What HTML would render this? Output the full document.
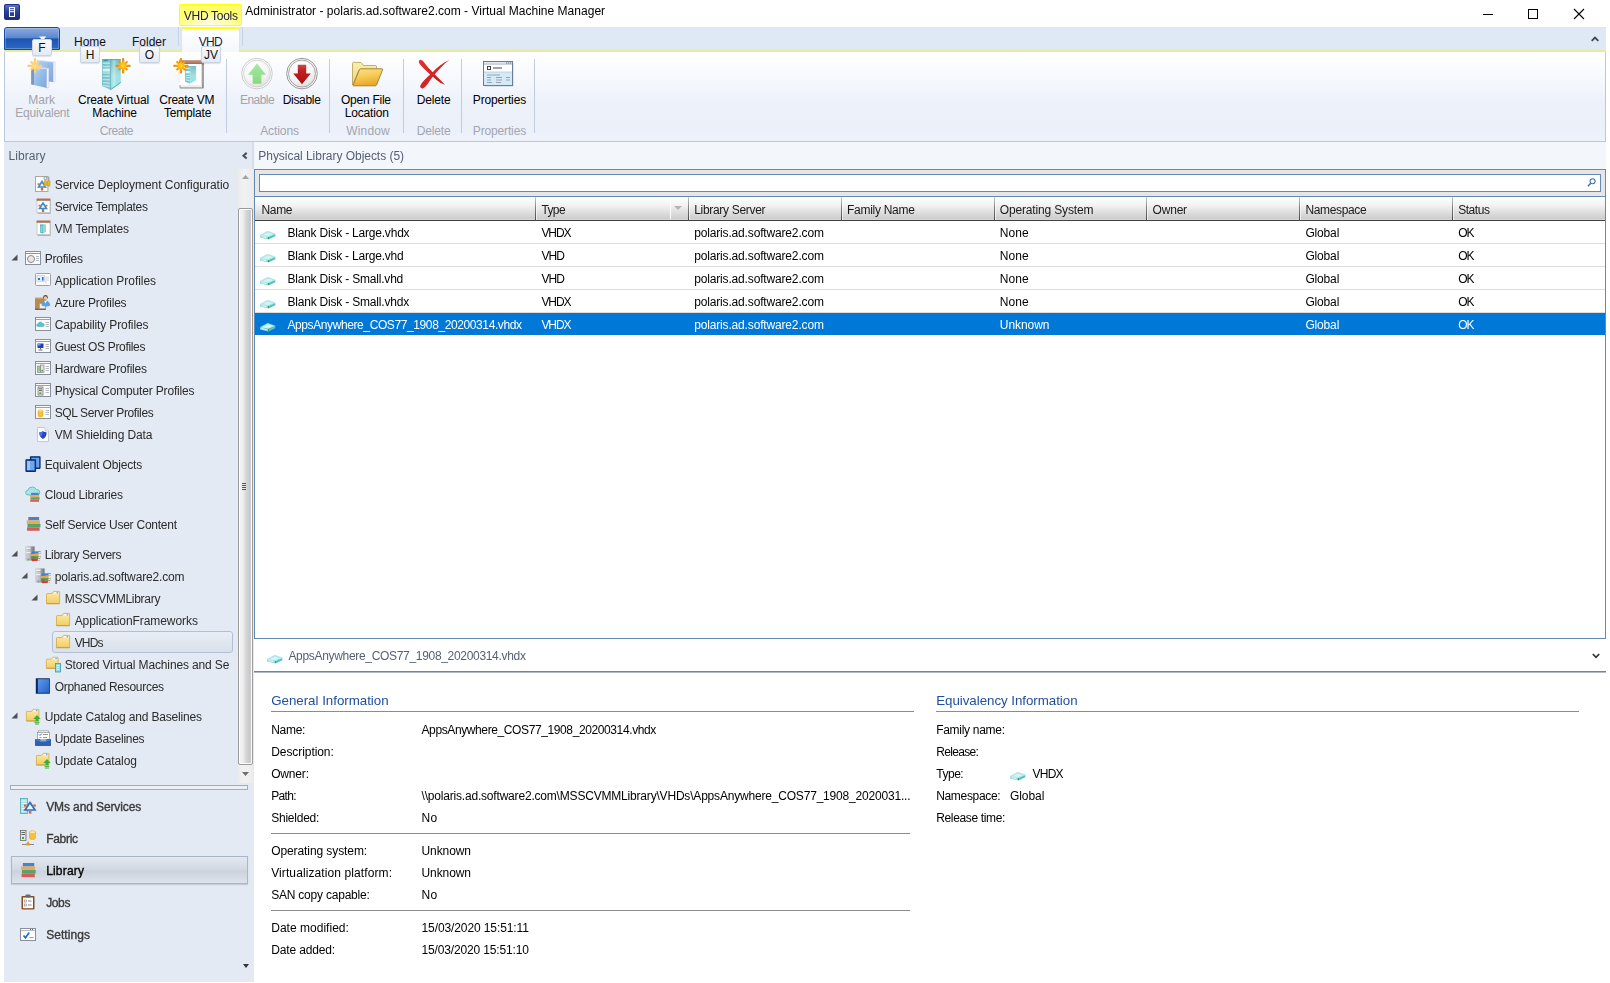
<!DOCTYPE html>
<html>
<head>
<meta charset="utf-8">
<title>Virtual Machine Manager</title>
<style>
*{box-sizing:border-box;margin:0;padding:0}
html,body{width:1610px;height:983px;overflow:hidden;background:#fff}
body{font-family:"Liberation Sans",sans-serif;font-size:12px;color:#1a1a1a;position:relative}
.abs{position:absolute}
.t{position:absolute;white-space:nowrap;line-height:14px;height:14px}
svg{position:absolute;overflow:visible}
/* title */
#titletxt{left:245px;top:4px;color:#000}
/* ribbon */
#tabstrip{left:4px;top:27px;width:1602px;height:24px;background:#dfe8f5}
#yline{left:4px;top:50px;width:1602px;height:2px;background:linear-gradient(#e6ec9e 0%,#e6ec9e 40%,#ffff00 40%,#ffff00 100%)}
#filebtn{left:4px;top:27px;width:56px;height:23px;border:1px solid #0e49ad;border-radius:3px 3px 0 0;background:linear-gradient(#8aaade 0%,#5d87cd 46%,#1c54b4 52%,#2f67c2 100%);box-shadow:inset 0 0 0 1px rgba(255,255,255,.25)}
#ctxtab{left:179px;top:4px;width:63px;height:22px;border:1px solid #ffff00;border-radius:2px;background:radial-gradient(ellipse 60% 70% at 50% 100%,#fffff0 0%,#ffff6e 100%)}
#vhdtab{left:181px;top:28px;width:59px;height:24px;border:1px solid #ffff00;border-bottom:none;border-radius:4px 4px 0 0;background:linear-gradient(#ffffff,#f4f7fc)}
.tabsep{width:1px;height:19px;top:27px;background:#c6d3e6}
.keytip{position:absolute;height:17px;border:1px solid #c9d3e3;border-radius:2px;background:linear-gradient(#f7f9fc,#e3eaf4);color:#111;text-align:center;line-height:17px;font-size:12px;box-shadow:0 1px 1px rgba(120,140,170,.25)}
#ribbon{left:4px;top:52px;width:1602px;height:90px;border:1px solid #b9c8de;border-top:none;background:linear-gradient(#ffffff 0%,#fbfcfe 14%,#f4f7fc 36%,#edf1f9 56%,#ecf0f9 85%,#eef2fa 100%)}
.rsep{position:absolute;width:1px;top:59px;height:74px;background:#c0cde0}
.rl{position:absolute;white-space:nowrap;text-align:center;line-height:13px;color:#000}
.rl.dis{color:#a6a6ad}
.gl{position:absolute;white-space:nowrap;text-align:center;line-height:14px;color:#a3a7b3}
/* left nav */
#left{left:4px;top:142px;width:250px;height:840px;background:#e4eaf3}
.nav{position:absolute;white-space:nowrap;line-height:14px;height:14px;color:#2b2b2b}
.ic{position:absolute;width:16px;height:16px}
.exp{position:absolute;width:0;height:0;border-left:6px solid transparent;border-bottom:6px solid #4a4a4a}
/* main */
#mainhdr{left:254px;top:142px;width:1352px;height:27px;background:#f3f6fb}
#listpanel{left:254px;top:169px;width:1352px;height:470px;border:1px solid #6389b6;background:#fff}
#searchbar{left:255px;top:170px;width:1350px;height:27px;background:#e6e6e6;border-bottom:1px solid #6389b6}
#searchbox{left:259px;top:174px;width:1342px;height:18px;border:1px solid #6389b6;background:#fff}
#colhdr{left:255px;top:197px;width:1350px;height:24px;background:linear-gradient(#ffffff 0%,#f3f3f3 35%,#e0e0e0 65%,#cdcdcd 94%,#dcdcdc 100%);border-bottom:1px solid #404040}
.csep{position:absolute;top:197px;width:1px;height:23px;background:linear-gradient(#c8c8c8,#7a7a7a 50%,#4c4c4c);box-shadow:1px 0 0 rgba(255,255,255,.6)}
.rowsep{position:absolute;left:255px;width:1350px;height:1px;background:#dcdcdc}
#selrow{left:255px;top:313px;width:1350px;height:22px;background:#0078d7}
.sel{color:#fff}
.slate{color:#566075}
.navb{-webkit-text-stroke:.35px currentColor}
.blue{color:#1e4e9d;font-size:13.4px}
.hr{position:absolute;height:1px;background:#8c8c8c}
#titlebar,#leftwrap,#mainwrap,#detailwrap{will-change:transform;position:absolute;left:0;top:0;width:0;height:0}

</style>
</head>
<body>
<div id="titlebar">
<svg style="left:4px;top:4px" width="16" height="16" viewBox="0 0 16 16">
<defs><linearGradient id="ag" x1="0" y1="0" x2="0" y2="1"><stop offset="0" stop-color="#5f74b8"/><stop offset=".5" stop-color="#2a3f96"/><stop offset="1" stop-color="#1a2c80"/></linearGradient></defs>
<rect x="0" y="0" width="16" height="16" rx="2" fill="#1d2f86"/><rect x="1" y="1" width="14" height="14" rx="1.5" fill="url(#ag)"/>
<rect x="5" y="3" width="6" height="10" fill="#fff"/><rect x="6" y="4.2" width="4" height="1" fill="#2a3f96"/><rect x="6" y="6.2" width="4" height="1" fill="#2a3f96"/><rect x="6" y="8.2" width="4" height="3.8" fill="#2a3f96"/>
</svg>
<div class="abs" id="ctxtab"></div>
<div class="t" style="left:183.80px;top:9px;letter-spacing:-0.283px;color:#1a1a40">VHD Tools</div>
<div class="t" style="left:245.20px;top:4px;letter-spacing:0.020px;color:#000">Administrator - polaris.ad.software2.com - Virtual Machine Manager</div>
<svg style="left:1483px;top:9px" width="100" height="11" viewBox="0 0 100 11"><path d="M0 5.5H10" stroke="#000" stroke-width="1" fill="none"/><rect x="45.5" y="0.5" width="9" height="9" stroke="#000" stroke-width="1" fill="none"/><path d="M91 0L101 10M101 0L91 10" stroke="#000" stroke-width="1.1" fill="none"/></svg>
</div>
<div id="ribbonwrap">
<div class="abs" id="tabstrip"></div><div class="abs" id="ribbon"></div><div class="abs" id="yline"></div><div class="abs" id="filebtn"></div>
<div class="abs tabsep" style="left:178px"></div><div class="abs tabsep" style="left:242px"></div><div class="abs" id="vhdtab"></div>
<div class="t" style="left:74px;top:35px;color:#111">Home</div>
<div class="t" style="left:132px;top:35px;color:#111">Folder</div>
<div class="t" style="left:198.70px;top:35px;letter-spacing:-0.668px;color:#1a1a40">VHD</div>
<svg style="left:1591px;top:36px" width="8" height="6" viewBox="0 0 8 6"><path d="M0.7 4.8L4 1.5L7.3 4.8" stroke="#3a4658" stroke-width="1.8" fill="none"/></svg>
<svg width="0" height="0" style="left:0;top:0"><defs>
<radialGradient id="sunG" gradientUnits="userSpaceOnUse" cx="0" cy="0" r="7.7"><stop offset="0" stop-color="#ffd638"/><stop offset=".35" stop-color="#ffb914"/><stop offset=".6" stop-color="#f59a00"/><stop offset="1" stop-color="#ee8a00"/></radialGradient>
<radialGradient id="sunF" gradientUnits="userSpaceOnUse" cx="0" cy="0" r="7.7"><stop offset="0" stop-color="#ffe08a"/><stop offset=".4" stop-color="#fbd27c"/><stop offset="1" stop-color="#f8c878"/></radialGradient>
<g id="sun"><path d="M-6.6 0H6.6M0 -6.6V6.6" stroke-width="2.3" stroke-linecap="round" fill="none"/><path d="M-3.7 -3.7L3.7 3.7M-3.7 3.7L3.7 -3.7" stroke-width="2.1" stroke-linecap="round" fill="none"/><circle r="3.4" stroke="none"/></g>
<linearGradient id="bookG" x1="0" y1="0" x2="1" y2="1"><stop offset="0" stop-color="#b4d2f4"/><stop offset=".5" stop-color="#93bbe8"/><stop offset="1" stop-color="#7ba7db"/></linearGradient>
<linearGradient id="srvF" x1="0" y1="0" x2="1" y2="0"><stop offset="0" stop-color="#6cbcc4"/><stop offset="1" stop-color="#86cdd4"/></linearGradient>
<linearGradient id="srvS" x1="0" y1="0" x2="0" y2="1"><stop offset="0" stop-color="#74c0c8"/><stop offset=".55" stop-color="#a4e0e3"/><stop offset="1" stop-color="#8ee6e8"/></linearGradient>
<linearGradient id="srvH" x1="0" y1="0" x2="1" y2="0"><stop offset="0" stop-color="#fff" stop-opacity=".05"/><stop offset=".4" stop-color="#fff" stop-opacity=".35"/><stop offset="1" stop-color="#fff" stop-opacity="0"/></linearGradient>
<radialGradient id="ballG" cx=".42" cy=".3" r=".85"><stop offset="0" stop-color="#ffffff"/><stop offset=".55" stop-color="#f6f6f6"/><stop offset="1" stop-color="#d0d0d0"/></radialGradient>
<linearGradient id="redG" x1="0" y1="0" x2="0" y2="1"><stop offset="0" stop-color="#cc4a4a"/><stop offset=".3" stop-color="#c22020"/><stop offset="1" stop-color="#ae0e0e"/></linearGradient>
<linearGradient id="grnG" x1="0" y1="0" x2="0" y2="1"><stop offset="0" stop-color="#a8e8a2"/><stop offset="1" stop-color="#86d97f"/></linearGradient>
<linearGradient id="fldB" x1="0" y1="0" x2="0" y2="1"><stop offset="0" stop-color="#f8efb0"/><stop offset="1" stop-color="#ecd67a"/></linearGradient>
<linearGradient id="fldF" x1="0" y1="0" x2=".3" y2="1"><stop offset="0" stop-color="#fde08a"/><stop offset=".5" stop-color="#f8cc58"/><stop offset="1" stop-color="#e8a92c"/></linearGradient>
<linearGradient id="xG" x1="0" y1="0" x2="1" y2="1"><stop offset="0" stop-color="#e23434"/><stop offset="1" stop-color="#c81414"/></linearGradient>
<linearGradient id="brnG" x1="0" y1="0" x2="0" y2="1"><stop offset="0" stop-color="#c69a84"/><stop offset="1" stop-color="#9c5c46"/></linearGradient>
</defs></svg>
<!-- Mark Equivalent (disabled) -->
<svg style="left:26px;top:58px" width="32" height="32" viewBox="0 0 32 32">
<path d="M11 2.1L27.3 4.1V24L11 22.4Z" fill="url(#bookG)"/><path d="M27.3 4.1L29 3.7V23.6L27.3 24Z" fill="#fff" stroke="#b4b8d8" stroke-width=".5"/><path d="M11 2.1L27.3 4.1" stroke="#dbe8fa" stroke-width=".8"/>
<path d="M5.1 9.4L8 9.6V27L5.1 26.4Z" fill="#8196b8"/><path d="M8 9.6L20.8 10.4V30L8 27Z" fill="url(#bookG)"/><path d="M20.8 10.4L22.8 9.9V29.6L20.8 30Z" fill="#fff" stroke="#b4b8d8" stroke-width=".5"/><path d="M5.1 9.4L20.8 10.4" stroke="#e6f0fc" stroke-width="1"/>
<use href="#sun" transform="translate(9,7.8)" fill="url(#sunF)" stroke="url(#sunF)"/>
</svg>
<!-- Create Virtual Machine -->
<svg style="left:98px;top:58px" width="34" height="32" viewBox="0 0 34 32">
<path d="M12.4 1.3H22.8V24.5L12.4 31.8Z" fill="url(#srvS)"/><path d="M14 1.1H19V27L14 30.6Z" fill="url(#srvH)"/>
<path d="M4.1 1.3H12.4V31.8L4.1 28.1Z" fill="url(#srvF)"/>
<path d="M4.1 1.6H22.8" stroke="#58adb6" stroke-width="1"/><ellipse cx="7.8" cy="2.4" rx="2.4" ry=".8" fill="#3e98a4"/>
<path d="M4.8 5.2H12M4.8 8.4H12M4.8 15H12M4.8 18.3H12.2M4.8 21.4L12 21.8M4.8 24.4L12 25.2M4.8 27.2L12 28.6" stroke="#c6eaed" stroke-width="1.5" fill="none" opacity=".8"/><rect x="4.8" y="10.6" width="7.2" height="3" fill="#e2f5f6" opacity=".9"/>
<path d="M12.4 1.5V31.5" stroke="#4fa5ae" stroke-width=".7"/>
<path d="M12.4 31.8L22.8 24.5" stroke="#3b8f9a" stroke-width=".8"/>
<use href="#sun" transform="translate(25.1,7.8)" fill="url(#sunG)" stroke="url(#sunG)"/>
</svg>
<!-- Create VM Template -->
<svg style="left:172px;top:56px" width="34" height="34" viewBox="0 0 34 34">
<rect x="7.6" y="6" width="24.2" height="26.6" rx=".8" fill="#8d8d8d"/><rect x="8.4" y="28.6" width="21.6" height="2.8" fill="#ededed"/>
<path d="M7 4.1H31.8V9H7Z" fill="url(#brnG)"/>
<path d="M7 8H29.8V28.2Q29.8 29 29 29H7.6Q5.8 29 5.2 29.6Q7 28.2 7 26Z" fill="#fff"/><path d="M29.8 8V28.2" stroke="#d8d8d8" stroke-width=".8"/><path d="M7 8V27" stroke="#dcdcdc" stroke-width=".6"/>
<path d="M18.2 10H24.1V24L18.2 27.7Z" fill="url(#srvS)"/><path d="M13.1 10H18.2V27.7L13.1 25.7Z" fill="url(#srvF)"/>
<path d="M13.7 12.5H17.7M13.7 19.5H17.7M13.7 21.7H17.7M13.7 23.8L17.7 24.6" stroke="#c6eaed" stroke-width="1.2" fill="none"/><rect x="13.7" y="15" width="4" height="2.4" fill="#e6f7f8"/>
<use href="#sun" transform="translate(8.9,9.8)" fill="url(#sunG)" stroke="url(#sunG)"/>
</svg>
<!-- Enable (disabled) -->
<svg style="left:241px;top:58px" width="32" height="32" viewBox="0 0 32 32">
<circle cx="16" cy="15.6" r="15.3" fill="#fdfdfd" stroke="#c6c6c6" stroke-width=".9"/><circle cx="16" cy="15.6" r="13.5" fill="url(#ballG)" stroke="#cdcdcd" stroke-width=".8"/>
<path d="M16 5.6L25 16.7H20.4V25.7H11.6V16.7H7Z" fill="url(#grnG)"/>
</svg>
<!-- Disable -->
<svg style="left:286px;top:58px" width="32" height="32" viewBox="0 0 32 32">
<circle cx="16" cy="15.6" r="15.3" fill="#fdfdfd" stroke="#8a8a8a" stroke-width=".9"/><circle cx="16" cy="15.6" r="13.5" fill="url(#ballG)" stroke="#9c9c9c" stroke-width=".9"/>
<path d="M16 26.2L24.8 15.6H20.2V6.7H11.8V15.6H7.2Z" fill="url(#redG)"/>
</svg>
<!-- Open File Location -->
<svg style="left:350px;top:58px" width="34" height="32" viewBox="0 0 34 32">
<path d="M2.5 27V5.5Q2.5 4.3 3.7 4.3L11 4.5L13.5 7.5H25.5Q26.5 7.5 26.5 8.5V12H9Z" fill="url(#fldB)" stroke="#b89a50" stroke-width=".8"/>
<path d="M3 27.5L9.5 11.5Q9.9 10.8 10.8 10.8H32Q33 10.8 32.6 11.8L26.5 27Q26.2 27.8 25.3 27.8H3.4Z" fill="url(#fldF)" stroke="#a07a28" stroke-width=".9"/>
</svg>
<!-- Delete -->
<svg style="left:417px;top:58px" width="34" height="32" viewBox="0 0 34 32">
<path d="M1.8 4.2Q1.6 2 3.5 1.8Q6 2.2 7.6 4.9Q10.5 9 14.2 12.8L21.4 20.1L28 26.8Q24 25.8 19.6 21.9L11.8 15.2Q7 11 4.4 8.1Q2.6 6.2 1.8 4.2Z" fill="url(#xG)"/>
<path d="M32.3 2Q27.5 4 23.3 7.3Q18.5 11 14.9 14.9Q10.5 18.5 7.2 22.2Q4 25.5 3.2 27.8Q3 30.6 5.8 30.4Q8.5 29.2 10.8 25.8Q13.5 21.5 17.1 17.1Q20.5 13 24.7 8.7Q28 5 32.3 2Z" fill="url(#xG)"/>
</svg>
<!-- Properties -->
<svg style="left:483px;top:60px" width="31" height="27" viewBox="0 0 31 27">
<rect x="1.5" y="2.5" width="29" height="24" fill="#c9cfd8"/>
<rect x=".5" y="1.5" width="29" height="24" fill="#fff" stroke="#6b7c98" stroke-width="1"/>
<rect x="1" y="2" width="28" height="2" fill="#dfe6f0"/><path d="M1 4.2H29" stroke="#8b9ab3" stroke-width=".6"/>
<rect x="23" y="2.4" width="1.2" height="1.2" fill="#6b7c98"/><rect x="25" y="2.4" width="1.2" height="1.2" fill="#6b7c98"/><rect x="27" y="2.4" width="1.2" height="1.2" fill="#6b7c98"/>
<rect x="4.5" y="6.5" width="3" height="3" fill="#fff" stroke="#444" stroke-width="1"/><path d="M10 8H19" stroke="#444" stroke-width="1"/>
<rect x="1" y="12" width="28" height="13" fill="#d5eaf8"/><path d="M1 12H29" stroke="#a9c4dc" stroke-width=".7"/>
<path d="M4 15H17M4 17.5H8M13 17.5H19M23 17.5H27M4 20H8M13 20H19M23 20H27M4 22.5H9M13 22.5H18" stroke="#9aa3ad" stroke-width="1"/>
</svg>

<div class="rsep" style="left:226px"></div>
<div class="rsep" style="left:329px"></div>
<div class="rsep" style="left:403px"></div>
<div class="rsep" style="left:461px"></div>
<div class="rsep" style="left:534px"></div>
<div class="t" style="left:28.35px;top:93px;letter-spacing:0.012px;color:#a3a3ab">Mark</div>
<div class="t" style="left:15.30px;top:106px;letter-spacing:-0.182px;color:#a3a3ab">Equivalent</div>
<div class="t" style="left:77.95px;top:93px;letter-spacing:-0.142px;color:#000">Create Virtual</div>
<div class="t" style="left:92.35px;top:106px;letter-spacing:-0.109px;color:#000">Machine</div>
<div class="t" style="left:159.35px;top:93px;letter-spacing:-0.281px;color:#000">Create VM</div>
<div class="t" style="left:164.05px;top:106px;letter-spacing:-0.198px;color:#000">Template</div>
<div class="t" style="left:239.90px;top:93px;letter-spacing:-0.513px;color:#a3a3ab">Enable</div>
<div class="t" style="left:282.75px;top:93px;letter-spacing:-0.320px;color:#000">Disable</div>
<div class="t" style="left:340.95px;top:93px;letter-spacing:-0.240px;color:#000">Open File</div>
<div class="t" style="left:344.65px;top:106px;letter-spacing:-0.152px;color:#000">Location</div>
<div class="t" style="left:416.80px;top:93px;letter-spacing:-0.177px;color:#000">Delete</div>
<div class="t" style="left:472.85px;top:93px;letter-spacing:-0.154px;color:#000">Properties</div>
<div class="t" style="left:99.65px;top:124px;letter-spacing:-0.423px;color:#a2a6b2">Create</div>
<div class="t" style="left:260.20px;top:124px;letter-spacing:-0.092px;color:#a2a6b2">Actions</div>
<div class="t" style="left:346.35px;top:124px;letter-spacing:0.124px;color:#a2a6b2">Window</div>
<div class="t" style="left:416.80px;top:124px;letter-spacing:-0.177px;color:#a2a6b2">Delete</div>
<div class="t" style="left:472.85px;top:124px;letter-spacing:-0.154px;color:#a2a6b2">Properties</div>
</div>
<div id="leftwrap">
<div class="abs" id="left"></div>
<div class="abs" style="left:252px;top:142px;width:2px;height:27px;background:#d7deea"></div>
<div class="t slate" style="left:8.50px;top:149px;letter-spacing:0.054px">Library</div>
<svg style="left:242px;top:152px" width="6" height="8" viewBox="0 0 6 8"><path d="M4.7 .9L1.5 3.7L4.7 6.5" stroke="#4a5258" stroke-width="2.1" fill="none"/></svg>
<div class="abs" style="left:52px;top:631px;width:181px;height:22px;border:1px solid #b3bfd3;border-radius:3px;background:linear-gradient(#e9eef6,#d9e0ec)"></div>
<svg class="ic" style="left:35px;top:176px" width="16" height="16" viewBox="0 0 16 16"><rect x=".5" y=".5" width="12.4" height="15" fill="#fff" stroke="#a9a9a9" stroke-width="1"/><g transform="translate(-.5,1)"><path d="M7.5 4.5L11 10H4Z" fill="none" stroke="#2f8fd0" stroke-width="1.6"/><rect x="6.3" y="10.5" width="2.4" height="3" fill="#e8622a"/><rect x="3" y="6.3" width="2.2" height="1.6" fill="#e8622a"/><rect x="9.8" y="6.3" width="2.2" height="1.6" fill="#e8622a"/></g><rect x="9.2" y="4.2" width="2.4" height="6" rx="1" fill="#ecbc1c" stroke="#b48a10" stroke-width=".5"/><rect x="12.6" y="4.6" width="2.4" height="5.6" rx="1" fill="#ecbc1c" stroke="#b48a10" stroke-width=".5"/><circle cx="10.4" cy="2.2" r="1.5" fill="none" stroke="#8d8d8d" stroke-width=".9"/><path d="M13.8 .8V4.6" stroke="#8d8d8d" stroke-width=".9"/></svg>
<div class="t" style="left:54.70px;top:178px;letter-spacing:-0.030px;color:#2b2b2b">Service Deployment Configuratio</div>
<svg class="ic" style="left:35px;top:198px" width="16" height="16" viewBox="0 0 16 16"><rect x="2.6" y="2.5" width="13" height="13.2" fill="#9d9d9d"/><rect x="2" y="1" width="13" height="13.6" fill="#fff" stroke="#c4c4c4" stroke-width=".8"/><path d="M1.6 1.7H15.4" stroke="#b07058" stroke-width="2.2"/><g transform="translate(.5,.5)"><path d="M7.5 4.5L11 10H4Z" fill="none" stroke="#2f8fd0" stroke-width="1.6"/><rect x="6.3" y="10.5" width="2.4" height="3" fill="#e8622a"/><rect x="3" y="6.3" width="2.2" height="1.6" fill="#e8622a"/><rect x="9.8" y="6.3" width="2.2" height="1.6" fill="#e8622a"/></g></svg>
<div class="t" style="left:54.70px;top:200px;letter-spacing:-0.282px;color:#2b2b2b">Service Templates</div>
<svg class="ic" style="left:35px;top:220px" width="16" height="16" viewBox="0 0 16 16"><rect x="2.6" y="2.5" width="13" height="13.2" fill="#9d9d9d"/><rect x="2" y="1" width="13" height="13.6" fill="#fff" stroke="#c4c4c4" stroke-width=".8"/><path d="M1.6 1.7H15.4" stroke="#b07058" stroke-width="2.2"/><path d="M5 4.5L8 4L11 4.5V12L8 13.5L5 12.5Z" fill="#8fd8dc"/><path d="M5 4.5L8 5V13.5L5 12.5Z" fill="#5cb8c0"/><path d="M5.5 7H7.5M5.5 9H7.5M5.5 11H7.5" stroke="#dff6f7" stroke-width=".8"/></svg>
<div class="t" style="left:54.70px;top:222px;letter-spacing:-0.137px;color:#2b2b2b">VM Templates</div>
<svg class="ic" style="left:25px;top:250px" width="16" height="16" viewBox="0 0 16 16"><rect x=".5" y="1.5" width="15" height="13" fill="#fcfcfc" stroke="#8a8f9c" stroke-width="1"/><path d="M1 3.5H15" stroke="#8a8f9c" stroke-width="1"/><circle cx="6" cy="9" r="3.5" fill="#e9e9e9" stroke="#8a8a8a" stroke-width="1"/><path d="M11 6.5H14M11 8.5H14M11 10.5H14" stroke="#b5b9c2" stroke-width="1"/><rect x="11" y="2.2" width="1" height="1" fill="#fff"/><rect x="13" y="2.2" width="1" height="1" fill="#fff"/></svg>
<div class="t" style="left:44.70px;top:252px;letter-spacing:-0.245px;color:#2b2b2b">Profiles</div>
<svg style="left:11px;top:254px" width="7" height="7" viewBox="0 0 7 7"><path d="M6.5 .5V6.5H.5Z" fill="#505050"/></svg>
<svg class="ic" style="left:35px;top:272px" width="16" height="16" viewBox="0 0 16 16"><rect x=".5" y="1.5" width="15" height="12" rx="1" fill="#fdfdfd" stroke="#9a9fab" stroke-width="1"/><rect x="2" y="3.5" width="7.5" height="6" fill="#e5effb" stroke="#b8c8e0" stroke-width=".6"/><rect x="3" y="6" width="2" height="2" fill="#2f74d8"/><rect x="7" y="5" width="1.6" height="3.6" fill="#2f74d8"/><path d="M11 4.5V11.5M13 4.5V9" stroke="#d5d8de" stroke-width="1.2"/></svg>
<div class="t" style="left:54.70px;top:274px;letter-spacing:-0.034px;color:#2b2b2b">Application Profiles</div>
<svg class="ic" style="left:35px;top:294px" width="16" height="16" viewBox="0 0 16 16"><rect x="0" y="4" width="11" height="12" fill="#b98a4e"/><path d="M0 4H11" stroke="#d6ad72" stroke-width="1.2"/><rect x="0" y="14.5" width="11" height="1.5" fill="#8c6230"/><rect x="4.5" y="9.5" width="6" height="5" fill="#f1f1f1" stroke="#9a9a9a" stroke-width=".6"/><circle cx="10.5" cy="3.2" r="2.3" fill="#5a4634"/><circle cx="10.5" cy="4" r="1.7" fill="#f0c9a0"/><path d="M6.5 11.5Q6.5 6.8 10.5 6.8Q14.8 6.8 15.3 11.5Q11 13.5 6.5 11.5Z" fill="#5aa2e6"/><path d="M9.3 6.8L10.5 9.5L11.7 6.8Z" fill="#fff"/></svg>
<div class="t" style="left:54.70px;top:296px;letter-spacing:-0.215px;color:#2b2b2b">Azure Profiles</div>
<svg class="ic" style="left:35px;top:316px" width="16" height="16" viewBox="0 0 16 16"><rect x=".5" y="1.5" width="15" height="13" fill="#fdfdfd" stroke="#8a8f9c" stroke-width="1"/><path d="M1 3.5H15" stroke="#9aa0ad" stroke-width="1"/><path d="M10.5 6.5H14M10.5 8.5H14M10.5 10.5H14" stroke="#b5b9c2" stroke-width="1"/><path d="M3 10.5Q1.6 10.5 1.6 9.2Q1.6 8 3 7.9Q3.3 6 5.3 6Q7 6 7.5 7.6Q9.3 7.6 9.3 9.1Q9.3 10.5 8 10.5Z" fill="#56c3cc" stroke="#3aa6b0" stroke-width=".5"/></svg>
<div class="t" style="left:54.70px;top:318px;letter-spacing:-0.124px;color:#2b2b2b">Capability Profiles</div>
<svg class="ic" style="left:35px;top:338px" width="16" height="16" viewBox="0 0 16 16"><rect x=".5" y="1.5" width="15" height="13" fill="#fdfdfd" stroke="#8a8f9c" stroke-width="1"/><path d="M1 3.5H15" stroke="#9aa0ad" stroke-width="1"/><path d="M10.5 6.5H14M10.5 8.5H14M10.5 10.5H14" stroke="#b5b9c2" stroke-width="1"/><rect x="2.5" y="5.5" width="6" height="4.5" fill="#1a3fc0"/><rect x="3" y="6" width="2.5" height="1.6" fill="#6f9cf2"/><path d="M5.5 10V11.5M3.5 12H7.5" stroke="#707070" stroke-width="1"/></svg>
<div class="t" style="left:54.70px;top:340px;letter-spacing:-0.333px;color:#2b2b2b">Guest OS Profiles</div>
<svg class="ic" style="left:35px;top:360px" width="16" height="16" viewBox="0 0 16 16"><rect x=".5" y="1.5" width="15" height="13" fill="#fdfdfd" stroke="#8a8f9c" stroke-width="1"/><path d="M1 3.5H15" stroke="#9aa0ad" stroke-width="1"/><path d="M10.5 6.5H14M10.5 8.5H14M10.5 10.5H14" stroke="#b5b9c2" stroke-width="1"/><rect x="2.5" y="6" width="3" height="6.5" fill="#c9ccd2" stroke="#777" stroke-width=".6"/><rect x="5.5" y="5" width="3.5" height="7.5" fill="#dfe2e8" stroke="#777" stroke-width=".6"/><rect x="6.4" y="10" width="1.6" height="1.5" fill="#36b030"/><path d="M3 8H5M3 10H5" stroke="#36b030" stroke-width=".7"/></svg>
<div class="t" style="left:54.70px;top:362px;letter-spacing:-0.185px;color:#2b2b2b">Hardware Profiles</div>
<svg class="ic" style="left:35px;top:382px" width="16" height="16" viewBox="0 0 16 16"><rect x=".5" y="1.5" width="15" height="13" fill="#fdfdfd" stroke="#8a8f9c" stroke-width="1"/><path d="M1 3.5H15" stroke="#9aa0ad" stroke-width="1"/><path d="M10.5 6.5H14M10.5 8.5H14M10.5 10.5H14" stroke="#b5b9c2" stroke-width="1"/><rect x="3" y="5" width="5" height="8" fill="#e4e6ea" stroke="#666" stroke-width=".7"/><path d="M4 6.8H7M4 8.6H7" stroke="#555" stroke-width=".9"/><rect x="4.3" y="10.3" width="2" height="1.7" fill="#36b030"/></svg>
<div class="t" style="left:54.70px;top:384px;letter-spacing:-0.166px;color:#2b2b2b">Physical Computer Profiles</div>
<svg class="ic" style="left:35px;top:404px" width="16" height="16" viewBox="0 0 16 16"><rect x=".5" y="1.5" width="15" height="13" fill="#fdfdfd" stroke="#8a8f9c" stroke-width="1"/><path d="M1 3.5H15" stroke="#9aa0ad" stroke-width="1"/><path d="M10.5 6.5H14M10.5 8.5H14M10.5 10.5H14" stroke="#b5b9c2" stroke-width="1"/><path d="M3 7V12Q3 13 5.5 13Q8 13 8 12V7Z" fill="#f7c13a"/><ellipse cx="5.5" cy="7" rx="2.5" ry="1.2" fill="#fbe08a" stroke="#e0a520" stroke-width=".5"/><path d="M3 7V12Q3 13 5.5 13Q8 13 8 12V7" fill="none" stroke="#e0a520" stroke-width=".5"/></svg>
<div class="t" style="left:54.70px;top:406px;letter-spacing:-0.366px;color:#2b2b2b">SQL Server Profiles</div>
<svg class="ic" style="left:35px;top:426px" width="16" height="16" viewBox="0 0 16 16"><path d="M2.5 1.5H10L13.5 5V15.5H2.5Z" fill="#fbfbfb" stroke="#c9c9c9" stroke-width="1"/><path d="M10 1.5V5H13.5" fill="#ececec" stroke="#c9c9c9" stroke-width=".7"/><path d="M8 5.2Q9.8 6.4 11.6 6.3Q11.9 11 8 13Q4.1 11 4.4 6.3Q6.2 6.4 8 5.2Z" fill="#2246c8"/><path d="M8 5.2Q6.2 6.4 4.4 6.3Q4.2 9 5.4 11Q7.8 9 8 5.2Z" fill="#4a72e6"/></svg>
<div class="t" style="left:54.70px;top:428px;letter-spacing:-0.099px;color:#2b2b2b">VM Shielding Data</div>
<svg class="ic" style="left:25px;top:456px" width="16" height="16" viewBox="0 0 16 16"><rect x="5.5" y=".8" width="9.5" height="11.5" rx=".2" fill="#3f7fd6" stroke="#0d2a6a" stroke-width="1.2"/><rect x="7" y="2" width="7" height="9" fill="#79aef0" opacity=".7"/><rect x="1" y="3.8" width="9.5" height="11.5" rx=".2" fill="#2f6cc6" stroke="#0d2a6a" stroke-width="1.2"/><path d="M2.2 5H9.3V14H2.2Z" fill="#6fa6ee"/><path d="M2.2 5H5V14H2.2Z" fill="#9cc4f6"/></svg>
<div class="t" style="left:44.70px;top:458px;letter-spacing:-0.144px;color:#2b2b2b">Equivalent Objects</div>
<svg class="ic" style="left:25px;top:486px" width="16" height="16" viewBox="0 0 16 16"><path d="M3.5 9Q.6 9 .6 6.6Q.6 4.4 3 4.2Q3.6 1 7.3 1Q10.3 1 11.2 3.6Q14.8 3.4 14.8 6.3Q14.8 9 12 9Z" fill="#a8e4e8" stroke="#4fbcc6" stroke-width=".9"/><g transform="translate(5.5,6.8) scale(.95)"><rect x=".6" y="0" width="8" height="2.3" fill="#4d80c6"/><rect x="-.6" y="2.3" width="9.8" height="2.4" fill="#dfae64"/><rect x="0" y="4.7" width="9.6" height="2.4" fill="#58a268"/><rect x="-.3" y="7.1" width="9.3" height="2.4" fill="#d65c5c"/></g></svg>
<div class="t" style="left:44.70px;top:488px;letter-spacing:-0.164px;color:#2b2b2b">Cloud Libraries</div>
<svg class="ic" style="left:25px;top:516px" width="16" height="16" viewBox="0 0 16 16"><g transform="translate(2.5,1) scale(1.35,1.45)"><rect x=".6" y="0" width="8" height="2.3" fill="#4d80c6"/><rect x="-.6" y="2.3" width="9.8" height="2.4" fill="#dfae64"/><rect x="0" y="4.7" width="9.6" height="2.4" fill="#58a268"/><rect x="-.3" y="7.1" width="9.3" height="2.4" fill="#d65c5c"/></g></svg>
<div class="t" style="left:44.70px;top:518px;letter-spacing:-0.236px;color:#2b2b2b">Self Service User Content</div>
<svg class="ic" style="left:25px;top:546px" width="16" height="16" viewBox="0 0 16 16"><defs><linearGradient id="lsG" x1="0" y1="0" x2="1" y2="0"><stop offset="0" stop-color="#c9cdd2"/><stop offset=".5" stop-color="#a9aeb5"/><stop offset="1" stop-color="#6e757e"/></linearGradient></defs><rect x=".3" y=".4" width="9.3" height="14.2" fill="url(#lsG)"/><path d="M1 2.2H5.5M1 6.6H5.5" stroke="#eef0f2" stroke-width="1.5"/><path d="M1 4.4H5.5M1 9H5.5M1 11H5.5" stroke="#dfe2e6" stroke-width=".8" opacity=".7"/><rect x="2.6" y="13" width="1.6" height="1.4" fill="#46c03a"/><path d="M7.2 5.6L15.6 5.2L15.8 7.6L6 8Z" fill="#3f7fd2"/><path d="M13.5 6.1L15.7 6V7.5L13.6 7.6Z" fill="#e8eef6"/><path d="M6 8L15.8 7.6L15.6 10L5.6 10.4Z" fill="#eda53f"/><path d="M13.6 8.2L15.7 8.1V9.8L13.6 9.9Z" fill="#f4f4f4"/><path d="M5.8 10.4L15.6 10L15.2 12.4L6.4 12.8Z" fill="#3c9c4a"/><path d="M13.4 10.6L15.4 10.5L15.2 12L13.3 12.2Z" fill="#f0f0f0"/><path d="M6.2 12.8L15.2 12.4L14.6 14.8L7 15.3Z" fill="#d83a3a"/><path d="M13 13L15 12.9L14.6 14.5L12.8 14.7Z" fill="#f0f0f0"/></svg>
<div class="t" style="left:44.70px;top:548px;letter-spacing:-0.325px;color:#2b2b2b">Library Servers</div>
<svg style="left:11px;top:550px" width="7" height="7" viewBox="0 0 7 7"><path d="M6.5 .5V6.5H.5Z" fill="#505050"/></svg>
<svg class="ic" style="left:35px;top:568px" width="16" height="16" viewBox="0 0 16 16"><defs><linearGradient id="lsG" x1="0" y1="0" x2="1" y2="0"><stop offset="0" stop-color="#c9cdd2"/><stop offset=".5" stop-color="#a9aeb5"/><stop offset="1" stop-color="#6e757e"/></linearGradient></defs><rect x=".3" y=".4" width="9.3" height="14.2" fill="url(#lsG)"/><path d="M1 2.2H5.5M1 6.6H5.5" stroke="#eef0f2" stroke-width="1.5"/><path d="M1 4.4H5.5M1 9H5.5M1 11H5.5" stroke="#dfe2e6" stroke-width=".8" opacity=".7"/><rect x="2.6" y="13" width="1.6" height="1.4" fill="#46c03a"/><path d="M7.2 5.6L15.6 5.2L15.8 7.6L6 8Z" fill="#3f7fd2"/><path d="M13.5 6.1L15.7 6V7.5L13.6 7.6Z" fill="#e8eef6"/><path d="M6 8L15.8 7.6L15.6 10L5.6 10.4Z" fill="#eda53f"/><path d="M13.6 8.2L15.7 8.1V9.8L13.6 9.9Z" fill="#f4f4f4"/><path d="M5.8 10.4L15.6 10L15.2 12.4L6.4 12.8Z" fill="#3c9c4a"/><path d="M13.4 10.6L15.4 10.5L15.2 12L13.3 12.2Z" fill="#f0f0f0"/><path d="M6.2 12.8L15.2 12.4L14.6 14.8L7 15.3Z" fill="#d83a3a"/><path d="M13 13L15 12.9L14.6 14.5L12.8 14.7Z" fill="#f0f0f0"/></svg>
<div class="t" style="left:54.70px;top:570px;letter-spacing:-0.152px;color:#2b2b2b">polaris.ad.software2.com</div>
<svg style="left:21px;top:572px" width="7" height="7" viewBox="0 0 7 7"><path d="M6.5 .5V6.5H.5Z" fill="#505050"/></svg>
<svg class="ic" style="left:45px;top:590px" width="16" height="16" viewBox="0 0 16 16"><defs><linearGradient id="fG" x1="0" y1="0" x2="0" y2="1"><stop offset="0" stop-color="#fcebad"/><stop offset="1" stop-color="#f1cd62"/></linearGradient></defs><path d="M1.5 13.6V4.2Q1.5 3.6 2.1 3.6H7L8.2 1.8Q8.5 1.4 9 1.4H14Q14.6 1.4 14.6 2V13.6Z" fill="url(#fG)" stroke="#d6b04a" stroke-width=".9"/><path d="M1.5 13.7H14.6" stroke="#c39a3c" stroke-width=".9"/><rect x="9.3" y="2.1" width="4" height="1.5" rx=".5" fill="#fff"/><rect x="11.5" y="2.3" width="1.6" height="1.1" fill="#4f94e6"/></svg>
<div class="t" style="left:64.70px;top:592px;letter-spacing:-0.280px;color:#2b2b2b">MSSCVMMLibrary</div>
<svg style="left:31px;top:594px" width="7" height="7" viewBox="0 0 7 7"><path d="M6.5 .5V6.5H.5Z" fill="#505050"/></svg>
<svg class="ic" style="left:55px;top:612px" width="16" height="16" viewBox="0 0 16 16"><defs><linearGradient id="fG" x1="0" y1="0" x2="0" y2="1"><stop offset="0" stop-color="#fcebad"/><stop offset="1" stop-color="#f1cd62"/></linearGradient></defs><path d="M1.5 13.6V4.2Q1.5 3.6 2.1 3.6H7L8.2 1.8Q8.5 1.4 9 1.4H14Q14.6 1.4 14.6 2V13.6Z" fill="url(#fG)" stroke="#d6b04a" stroke-width=".9"/><path d="M1.5 13.7H14.6" stroke="#c39a3c" stroke-width=".9"/><rect x="9.3" y="2.1" width="4" height="1.5" rx=".5" fill="#fff"/><rect x="11.5" y="2.3" width="1.6" height="1.1" fill="#4f94e6"/></svg>
<div class="t" style="left:74.70px;top:614px;letter-spacing:-0.075px;color:#2b2b2b">ApplicationFrameworks</div>
<svg class="ic" style="left:55px;top:634px" width="16" height="16" viewBox="0 0 16 16"><defs><linearGradient id="fG" x1="0" y1="0" x2="0" y2="1"><stop offset="0" stop-color="#fcebad"/><stop offset="1" stop-color="#f1cd62"/></linearGradient></defs><path d="M1.5 13.6V4.2Q1.5 3.6 2.1 3.6H7L8.2 1.8Q8.5 1.4 9 1.4H14Q14.6 1.4 14.6 2V13.6Z" fill="url(#fG)" stroke="#d6b04a" stroke-width=".9"/><path d="M1.5 13.7H14.6" stroke="#c39a3c" stroke-width=".9"/><rect x="9.3" y="2.1" width="4" height="1.5" rx=".5" fill="#fff"/><rect x="11.5" y="2.3" width="1.6" height="1.1" fill="#4f94e6"/></svg>
<div class="t" style="left:74.70px;top:636px;letter-spacing:-0.846px;color:#2b2b2b">VHDs</div>
<svg class="ic" style="left:45px;top:656px" width="16" height="16" viewBox="0 0 16 16"><g transform="scale(.9)"><defs><linearGradient id="fG" x1="0" y1="0" x2="0" y2="1"><stop offset="0" stop-color="#fcebad"/><stop offset="1" stop-color="#f1cd62"/></linearGradient></defs><path d="M1.5 13.6V4.2Q1.5 3.6 2.1 3.6H7L8.2 1.8Q8.5 1.4 9 1.4H14Q14.6 1.4 14.6 2V13.6Z" fill="url(#fG)" stroke="#d6b04a" stroke-width=".9"/><path d="M1.5 13.7H14.6" stroke="#c39a3c" stroke-width=".9"/><rect x="9.3" y="2.1" width="4" height="1.5" rx=".5" fill="#fff"/><rect x="11.5" y="2.3" width="1.6" height="1.1" fill="#4f94e6"/></g><rect x="10.5" y="7.5" width="5" height="8.5" fill="#8fd8dc" stroke="#3e9aa6" stroke-width=".8"/><path d="M11.5 9.5H14.5M11.5 11.5H14.5M11.5 13.5H14.5" stroke="#e6fafa" stroke-width=".9"/></svg>
<div class="t" style="left:64.70px;top:658px;letter-spacing:-0.132px;color:#2b2b2b">Stored Virtual Machines and Se</div>
<svg class="ic" style="left:35px;top:678px" width="16" height="16" viewBox="0 0 16 16"><defs><linearGradient id="orG" x1="0" y1="0" x2="1" y2="1"><stop offset="0" stop-color="#5f9aec"/><stop offset="1" stop-color="#2463c8"/></linearGradient></defs><rect x=".8" y=".3" width="14" height="15.4" fill="#0a1c50"/><rect x="3" y="1.2" width="11" height="13.6" fill="url(#orG)"/><rect x="1.6" y="1.2" width="1.4" height="13.6" fill="#16347c"/></svg>
<div class="t" style="left:54.70px;top:680px;letter-spacing:-0.274px;color:#2b2b2b">Orphaned Resources</div>
<svg class="ic" style="left:25px;top:708px" width="16" height="16" viewBox="0 0 16 16"><g transform="scale(.95)"><defs><linearGradient id="fG" x1="0" y1="0" x2="0" y2="1"><stop offset="0" stop-color="#fcebad"/><stop offset="1" stop-color="#f1cd62"/></linearGradient></defs><path d="M1.5 13.6V4.2Q1.5 3.6 2.1 3.6H7L8.2 1.8Q8.5 1.4 9 1.4H14Q14.6 1.4 14.6 2V13.6Z" fill="url(#fG)" stroke="#d6b04a" stroke-width=".9"/><path d="M1.5 13.7H14.6" stroke="#c39a3c" stroke-width=".9"/><rect x="9.3" y="2.1" width="4" height="1.5" rx=".5" fill="#fff"/><rect x="11.5" y="2.3" width="1.6" height="1.1" fill="#4f94e6"/></g><path d="M12 7L15.7 11H13.5V13H10.5V11H8.3Z" fill="#3cb034"/><path d="M9.5 14.3H14.5M10 16H14" stroke="#3cb034" stroke-width="1"/></svg>
<div class="t" style="left:44.70px;top:710px;letter-spacing:-0.178px;color:#2b2b2b">Update Catalog and Baselines</div>
<svg style="left:11px;top:712px" width="7" height="7" viewBox="0 0 7 7"><path d="M6.5 .5V6.5H.5Z" fill="#505050"/></svg>
<svg class="ic" style="left:35px;top:730px" width="16" height="16" viewBox="0 0 16 16"><rect x="3.5" y=".8" width="10" height="6" fill="#f7f7f7" stroke="#9a9a9a" stroke-width=".7"/><rect x="2.5" y="2.3" width="12" height="7" fill="#fff" stroke="#8a8a8a" stroke-width=".7"/><path d="M4 4.5L5 5.5L6.7 3.7" stroke="#2d74d0" stroke-width="1" fill="none"/><path d="M8 4.5H13M4.5 7.5H6.5M8 7.5H12" stroke="#8a8a8a" stroke-width=".9"/><path d="M.5 9.5H4.5L5.5 11H11L12 9.5H15.5V15.5H.5Z" fill="#2a62b4" stroke="#17407e" stroke-width=".7"/><path d="M1 10H4.3L5.3 11.6H11.2L12.2 10H15" stroke="#6f9fe0" stroke-width=".7" fill="none"/></svg>
<div class="t" style="left:54.70px;top:732px;letter-spacing:-0.277px;color:#2b2b2b">Update Baselines</div>
<svg class="ic" style="left:35px;top:752px" width="16" height="16" viewBox="0 0 16 16"><g transform="scale(.95)"><defs><linearGradient id="fG" x1="0" y1="0" x2="0" y2="1"><stop offset="0" stop-color="#fcebad"/><stop offset="1" stop-color="#f1cd62"/></linearGradient></defs><path d="M1.5 13.6V4.2Q1.5 3.6 2.1 3.6H7L8.2 1.8Q8.5 1.4 9 1.4H14Q14.6 1.4 14.6 2V13.6Z" fill="url(#fG)" stroke="#d6b04a" stroke-width=".9"/><path d="M1.5 13.7H14.6" stroke="#c39a3c" stroke-width=".9"/><rect x="9.3" y="2.1" width="4" height="1.5" rx=".5" fill="#fff"/><rect x="11.5" y="2.3" width="1.6" height="1.1" fill="#4f94e6"/></g><path d="M12 7L15.7 11H13.5V13H10.5V11H8.3Z" fill="#3cb034"/><path d="M9.5 14.3H14.5M10 16H14" stroke="#3cb034" stroke-width="1"/></svg>
<div class="t" style="left:54.70px;top:754px;letter-spacing:-0.091px;color:#2b2b2b">Update Catalog</div>
<div class="abs" style="left:237px;top:169px;width:16px;height:614px;background:linear-gradient(90deg,#e9e9e9,#f2f2f2 40%,#ececec)"></div>
<div class="abs" style="left:238px;top:208px;width:15px;height:557px;border:1px solid #9a9a9a;border-radius:2px;box-shadow:inset 0 0 0 1px rgba(255,255,255,.95);background:linear-gradient(90deg,#f3f3f3 0%,#eeeeee 30%,#d6d6d6 55%,#c9c9cb 80%,#cfcfd1 100%)"></div>
<svg style="left:242px;top:175px" width="7" height="4" viewBox="0 0 7 4"><path d="M0 4L3.5 0L7 4Z" fill="#a2a2a2"/></svg>
<svg style="left:242px;top:772px" width="7" height="4" viewBox="0 0 7 4"><path d="M0 0L3.5 4L7 0Z" fill="#6e6e6e"/></svg>
<svg style="left:242px;top:483px" width="4" height="7" viewBox="0 0 4 7"><path d="M0 .5H4M0 2.5H4M0 4.5H4M0 6.5H4" stroke="#555" stroke-width="1"/></svg>
<div class="abs" style="left:10px;top:785px;width:238px;height:5px;border:1px solid #a3adba;background:#eceff4"></div>
<div class="abs" style="left:11px;top:856px;width:237px;height:28px;border:1px solid #a9b6ca;box-shadow:0 1px 1px rgba(60,80,110,.18);background:linear-gradient(#e3e8ef 0%,#d3dae4 45%,#cbd3de 55%,#dde3eb 100%)"></div>
<svg class="ic" style="left:20px;top:798px" width="16" height="16" viewBox="0 0 16 16"><rect x=".5" y=".5" width="7" height="15" fill="#a8e0e4" stroke="#4aa8b4" stroke-width=".8"/><path d="M1.5 3H6.5M1.5 5.5H6.5M1.5 8H6.5M1.5 10.5H6.5M1.5 13H6.5" stroke="#e8fafa" stroke-width="1"/><path d="M10 4.5L15 12H5Z" fill="#e9f2fc" stroke="#2d6fc0" stroke-width="1.7"/><rect x="4" y="6.5" width="2.6" height="2.2" fill="#e8622a"/><rect x="13.2" y="6.5" width="2.6" height="2.2" fill="#e8622a"/><rect x="8.8" y="13" width="2.6" height="2.6" fill="#e8622a"/></svg>
<div class="t navb" style="left:46.20px;top:800px;letter-spacing:-0.107px;color:#3a3a3a">VMs and Services</div>
<svg class="ic" style="left:20px;top:830px" width="16" height="16" viewBox="0 0 16 16"><rect x=".5" y=".5" width="5.5" height="10" fill="#e3e5e9" stroke="#6a6a6a" stroke-width=".8"/><path d="M1.5 2.5H5M1.5 4.5H5" stroke="#555" stroke-width=".9"/><rect x="2" y="7" width="2" height="2" fill="#36b030"/><path d="M9.5 2V8Q9.5 9.5 12.5 9.5Q15.5 9.5 15.5 8V2Z" fill="#f7c13a" stroke="#dca21c" stroke-width=".5"/><ellipse cx="12.5" cy="2.2" rx="3" ry="1.5" fill="#fde9a0" stroke="#dca21c" stroke-width=".5"/><path d="M2 14.5H14" stroke="#8a8a8a" stroke-width="1"/><path d="M6 14.5L8 11L10 14.5Z" fill="#e8a020"/><rect x="6.5" y="13" width="3" height="2.6" fill="#e8a020"/></svg>
<div class="t navb" style="left:46.20px;top:832px;letter-spacing:-0.307px;color:#3a3a3a">Fabric</div>
<svg class="ic" style="left:20px;top:862px" width="16" height="16" viewBox="0 0 16 16"><g transform="translate(2,1) scale(1.42,1.5)"><rect x=".6" y="0" width="8" height="2.3" fill="#4d80c6"/><rect x="-.6" y="2.3" width="9.8" height="2.4" fill="#dfae64"/><rect x="0" y="4.7" width="9.6" height="2.4" fill="#58a268"/><rect x="-.3" y="7.1" width="9.3" height="2.4" fill="#d65c5c"/></g></svg>
<div class="t navb" style="left:46.20px;top:864px;letter-spacing:0.171px;color:#000">Library</div>
<svg class="ic" style="left:20px;top:894px" width="16" height="16" viewBox="0 0 16 16"><rect x="1.5" y="2" width="13" height="13.5" rx="1" fill="#8a4a1c"/><rect x="3" y="3.5" width="10" height="10.7" fill="#fbfbfb"/><rect x="5.5" y=".5" width="5" height="3" rx=".8" fill="#6a6a6a"/><rect x="4.6" y="6" width="2" height="2" fill="#fff" stroke="#8a8a8a" stroke-width=".6"/><rect x="4.6" y="10" width="2" height="2" fill="#fff" stroke="#8a8a8a" stroke-width=".6"/><path d="M8 7H11.5M8 11H11.5" stroke="#8a8a8a" stroke-width="1"/></svg>
<div class="t navb" style="left:46.20px;top:896px;letter-spacing:-0.382px;color:#3a3a3a">Jobs</div>
<svg class="ic" style="left:20px;top:926px" width="16" height="16" viewBox="0 0 16 16"><rect x=".5" y="2.5" width="15" height="12" fill="#fff" stroke="#8a8f9c" stroke-width="1"/><path d="M1 4.5H15" stroke="#b5bac5" stroke-width="1"/><rect x="10" y="3" width="1" height="1" fill="#666"/><rect x="12" y="3" width="1" height="1" fill="#666"/><path d="M3.5 9.5L5.5 11.8L9.2 6.5" stroke="#1f6fd0" stroke-width="1.7" fill="none"/><path d="M9.5 11.5H13.5" stroke="#9a9a9a" stroke-width="1"/></svg>
<div class="t navb" style="left:46.20px;top:928px;letter-spacing:0.049px;color:#3a3a3a">Settings</div>
<svg style="left:243px;top:964px" width="6" height="4" viewBox="0 0 6 4"><path d="M0 0L3 4L6 0Z" fill="#333"/></svg>
</div>
<div id="mainwrap">
<div class="abs" id="mainhdr"></div>
<div class="t slate" style="left:258.30px;top:149px;letter-spacing:-0.037px">Physical Library Objects (5)</div>
<div class="abs" id="listpanel"></div><div class="abs" id="searchbar"></div><div class="abs" id="searchbox"></div>
<svg style="left:1587px;top:178px" width="9" height="9" viewBox="0 0 9 9"><circle cx="5.6" cy="3.3" r="2.5" fill="#fff" stroke="#3f6fb0" stroke-width="1.1"/><path d="M3.8 5.2L.8 8.2" stroke="#3f6fb0" stroke-width="1.5"/></svg>
<div class="abs" id="colhdr"></div>
<div class="t" style="left:261.60px;top:203px;letter-spacing:-0.403px;color:#1a1a1a">Name</div>
<div class="t" style="left:541.40px;top:203px;letter-spacing:-0.605px;color:#1a1a1a">Type</div>
<div class="t" style="left:694.20px;top:203px;letter-spacing:-0.312px;color:#1a1a1a">Library Server</div>
<div class="t" style="left:847px;top:203px;letter-spacing:-0.287px;color:#1a1a1a">Family Name</div>
<div class="t" style="left:999.80px;top:203px;letter-spacing:-0.156px;color:#1a1a1a">Operating System</div>
<div class="t" style="left:1152.60px;top:203px;letter-spacing:-0.210px;color:#1a1a1a">Owner</div>
<div class="t" style="left:1305.40px;top:203px;letter-spacing:-0.341px;color:#1a1a1a">Namespace</div>
<div class="t" style="left:1458.20px;top:203px;letter-spacing:-0.464px;color:#1a1a1a">Status</div>
<div class="csep" style="left:535px"></div>
<div class="csep" style="left:688px"></div>
<div class="csep" style="left:841px"></div>
<div class="csep" style="left:994px"></div>
<div class="csep" style="left:1146px"></div>
<div class="csep" style="left:1299px"></div>
<div class="csep" style="left:1452px"></div>
<div class="abs" style="left:670px;top:198px;width:1px;height:21px;background:rgba(255,255,255,.9)"></div>
<svg style="left:674px;top:206px" width="8" height="4" viewBox="0 0 8 4"><path d="M0 0H8L4 4Z" fill="#b4b4b4"/></svg>
<div class="abs" id="selrow"></div>
<div class="rowsep" style="top:243px"></div>
<svg style="left:260px;top:230px" width="16" height="11" viewBox="0 0 16 11"><path d="M0 5.4L7.7 1.3L15.3 3.9L8.4 6.9Z" fill="#b4e8eb"/><path d="M2.5 5.2L7.8 2.4L12.8 4L8.3 6Z" fill="#e2f7f8" opacity=".75"/><path d="M0 5.4L8.4 6.9V9.4L0 7.6Z" fill="#8fdade"/><path d="M1.5 6.6L6.5 7.6" stroke="#e8fafa" stroke-width=".9"/><path d="M8.4 6.9L15.3 3.9V6.2L8.4 9.4Z" fill="#52c2ca"/><path d="M0 5.4L7.7 1.3L15.3 3.9" fill="none" stroke="#8ed8dd" stroke-width=".5"/><rect x="7.9" y="7.2" width="1.1" height="1.6" fill="#2a9a2a"/></svg>
<div class="t" style="left:287.40px;top:226px;letter-spacing:-0.205px;color:#000">Blank Disk - Large.vhdx</div>
<div class="t" style="left:541.40px;top:226px;letter-spacing:-1.047px;color:#000">VHDX</div>
<div class="t" style="left:694.20px;top:226px;letter-spacing:-0.160px;color:#000">polaris.ad.software2.com</div>
<div class="t" style="left:999.80px;top:226px;letter-spacing:0.038px;color:#000">None</div>
<div class="t" style="left:1305.40px;top:226px;letter-spacing:-0.157px;color:#000">Global</div>
<div class="t" style="left:1458.20px;top:226px;letter-spacing:-0.938px;color:#000">OK</div>
<div class="rowsep" style="top:266px"></div>
<svg style="left:260px;top:253px" width="16" height="11" viewBox="0 0 16 11"><path d="M0 5.4L7.7 1.3L15.3 3.9L8.4 6.9Z" fill="#b4e8eb"/><path d="M2.5 5.2L7.8 2.4L12.8 4L8.3 6Z" fill="#e2f7f8" opacity=".75"/><path d="M0 5.4L8.4 6.9V9.4L0 7.6Z" fill="#8fdade"/><path d="M1.5 6.6L6.5 7.6" stroke="#e8fafa" stroke-width=".9"/><path d="M8.4 6.9L15.3 3.9V6.2L8.4 9.4Z" fill="#52c2ca"/><path d="M0 5.4L7.7 1.3L15.3 3.9" fill="none" stroke="#8ed8dd" stroke-width=".5"/><rect x="7.9" y="7.2" width="1.1" height="1.6" fill="#2a9a2a"/></svg>
<div class="t" style="left:287.40px;top:249px;letter-spacing:-0.210px;color:#000">Blank Disk - Large.vhd</div>
<div class="t" style="left:541.40px;top:249px;letter-spacing:-0.918px;color:#000">VHD</div>
<div class="t" style="left:694.20px;top:249px;letter-spacing:-0.160px;color:#000">polaris.ad.software2.com</div>
<div class="t" style="left:999.80px;top:249px;letter-spacing:0.038px;color:#000">None</div>
<div class="t" style="left:1305.40px;top:249px;letter-spacing:-0.157px;color:#000">Global</div>
<div class="t" style="left:1458.20px;top:249px;letter-spacing:-0.938px;color:#000">OK</div>
<div class="rowsep" style="top:289px"></div>
<svg style="left:260px;top:276px" width="16" height="11" viewBox="0 0 16 11"><path d="M0 5.4L7.7 1.3L15.3 3.9L8.4 6.9Z" fill="#b4e8eb"/><path d="M2.5 5.2L7.8 2.4L12.8 4L8.3 6Z" fill="#e2f7f8" opacity=".75"/><path d="M0 5.4L8.4 6.9V9.4L0 7.6Z" fill="#8fdade"/><path d="M1.5 6.6L6.5 7.6" stroke="#e8fafa" stroke-width=".9"/><path d="M8.4 6.9L15.3 3.9V6.2L8.4 9.4Z" fill="#52c2ca"/><path d="M0 5.4L7.7 1.3L15.3 3.9" fill="none" stroke="#8ed8dd" stroke-width=".5"/><rect x="7.9" y="7.2" width="1.1" height="1.6" fill="#2a9a2a"/></svg>
<div class="t" style="left:287.40px;top:272px;letter-spacing:-0.197px;color:#000">Blank Disk - Small.vhd</div>
<div class="t" style="left:541.40px;top:272px;letter-spacing:-0.918px;color:#000">VHD</div>
<div class="t" style="left:694.20px;top:272px;letter-spacing:-0.160px;color:#000">polaris.ad.software2.com</div>
<div class="t" style="left:999.80px;top:272px;letter-spacing:0.038px;color:#000">None</div>
<div class="t" style="left:1305.40px;top:272px;letter-spacing:-0.157px;color:#000">Global</div>
<div class="t" style="left:1458.20px;top:272px;letter-spacing:-0.938px;color:#000">OK</div>
<div class="rowsep" style="top:312px"></div>
<svg style="left:260px;top:299px" width="16" height="11" viewBox="0 0 16 11"><path d="M0 5.4L7.7 1.3L15.3 3.9L8.4 6.9Z" fill="#b4e8eb"/><path d="M2.5 5.2L7.8 2.4L12.8 4L8.3 6Z" fill="#e2f7f8" opacity=".75"/><path d="M0 5.4L8.4 6.9V9.4L0 7.6Z" fill="#8fdade"/><path d="M1.5 6.6L6.5 7.6" stroke="#e8fafa" stroke-width=".9"/><path d="M8.4 6.9L15.3 3.9V6.2L8.4 9.4Z" fill="#52c2ca"/><path d="M0 5.4L7.7 1.3L15.3 3.9" fill="none" stroke="#8ed8dd" stroke-width=".5"/><rect x="7.9" y="7.2" width="1.1" height="1.6" fill="#2a9a2a"/></svg>
<div class="t" style="left:287.40px;top:295px;letter-spacing:-0.192px;color:#000">Blank Disk - Small.vhdx</div>
<div class="t" style="left:541.40px;top:295px;letter-spacing:-1.047px;color:#000">VHDX</div>
<div class="t" style="left:694.20px;top:295px;letter-spacing:-0.160px;color:#000">polaris.ad.software2.com</div>
<div class="t" style="left:999.80px;top:295px;letter-spacing:0.038px;color:#000">None</div>
<div class="t" style="left:1305.40px;top:295px;letter-spacing:-0.157px;color:#000">Global</div>
<div class="t" style="left:1458.20px;top:295px;letter-spacing:-0.938px;color:#000">OK</div>
<svg style="left:260px;top:322px" width="16" height="11" viewBox="0 0 16 11"><path d="M0 5.4L7.7 1.3L15.3 3.9L8.4 6.9Z" fill="#b4e8eb"/><path d="M2.5 5.2L7.8 2.4L12.8 4L8.3 6Z" fill="#e2f7f8" opacity=".75"/><path d="M0 5.4L8.4 6.9V9.4L0 7.6Z" fill="#8fdade"/><path d="M1.5 6.6L6.5 7.6" stroke="#e8fafa" stroke-width=".9"/><path d="M8.4 6.9L15.3 3.9V6.2L8.4 9.4Z" fill="#52c2ca"/><path d="M0 5.4L7.7 1.3L15.3 3.9" fill="none" stroke="#8ed8dd" stroke-width=".5"/><rect x="7.9" y="7.2" width="1.1" height="1.6" fill="#2a9a2a"/></svg>
<div class="t" style="left:287.40px;top:318px;letter-spacing:-0.395px;color:#fff">AppsAnywhere_COS77_1908_20200314.vhdx</div>
<div class="t" style="left:541.40px;top:318px;letter-spacing:-1.047px;color:#fff">VHDX</div>
<div class="t" style="left:694.20px;top:318px;letter-spacing:-0.160px;color:#fff">polaris.ad.software2.com</div>
<div class="t" style="left:999.80px;top:318px;letter-spacing:-0.071px;color:#fff">Unknown</div>
<div class="t" style="left:1305.40px;top:318px;letter-spacing:-0.157px;color:#fff">Global</div>
<div class="t" style="left:1458.20px;top:318px;letter-spacing:-0.938px;color:#fff">OK</div>
</div>
<div id="detailwrap">
<svg style="left:267px;top:654px" width="16" height="11" viewBox="0 0 16 11"><path d="M0 5.4L7.7 1.3L15.3 3.9L8.4 6.9Z" fill="#b4e8eb"/><path d="M2.5 5.2L7.8 2.4L12.8 4L8.3 6Z" fill="#e2f7f8" opacity=".75"/><path d="M0 5.4L8.4 6.9V9.4L0 7.6Z" fill="#8fdade"/><path d="M1.5 6.6L6.5 7.6" stroke="#e8fafa" stroke-width=".9"/><path d="M8.4 6.9L15.3 3.9V6.2L8.4 9.4Z" fill="#52c2ca"/><path d="M0 5.4L7.7 1.3L15.3 3.9" fill="none" stroke="#8ed8dd" stroke-width=".5"/><rect x="7.9" y="7.2" width="1.1" height="1.6" fill="#2a9a2a"/></svg>
<div class="t slate" style="left:288.40px;top:649px;letter-spacing:-0.315px">AppsAnywhere_COS77_1908_20200314.vhdx</div>
<svg style="left:1592px;top:653px" width="8" height="6" viewBox="0 0 8 6"><path d="M.8 1L4 4.3L7.2 1" stroke="#333" stroke-width="1.7" fill="none"/></svg>
<div class="abs" style="left:254px;top:671px;width:1352px;height:1px;background:#6488b4"></div><div class="abs" style="left:254px;top:672px;width:1352px;height:1px;background:#b4b9c2"></div>
<div class="t" style="font-size:13.33px;left:271.20px;top:694px;letter-spacing:-0.022px;color:#1e4e9d">General Information</div>
<div class="hr" style="left:271px;top:711px;width:643px"></div>
<div class="t" style="font-size:13.33px;left:936.20px;top:694px;letter-spacing:-0.039px;color:#1e4e9d">Equivalency Information</div>
<div class="hr" style="left:936px;top:711px;width:643px"></div>
<div class="t" style="left:271.20px;top:723px;letter-spacing:-0.285px;color:#000">Name:</div>
<div class="t" style="left:421.50px;top:723px;letter-spacing:-0.390px;color:#000">AppsAnywhere_COS77_1908_20200314.vhdx</div>
<div class="t" style="left:271.20px;top:745px;letter-spacing:-0.069px;color:#000">Description:</div>
<div class="t" style="left:271.20px;top:767px;letter-spacing:-0.175px;color:#000">Owner:</div>
<div class="t" style="left:271.20px;top:789px;letter-spacing:-0.630px;color:#000">Path:</div>
<div class="t" style="left:421.50px;top:789px;letter-spacing:-0.190px;color:#000">\\polaris.ad.software2.com\MSSCVMMLibrary\VHDs\AppsAnywhere_COS77_1908_2020031...</div>
<div class="t" style="left:271.20px;top:811px;letter-spacing:-0.230px;color:#000">Shielded:</div>
<div class="t" style="left:421.50px;top:811px;letter-spacing:0.261px;color:#000">No</div>
<div class="t" style="left:271.20px;top:844px;letter-spacing:-0.085px;color:#000">Operating system:</div>
<div class="t" style="left:421.50px;top:844px;letter-spacing:-0.087px;color:#000">Unknown</div>
<div class="t" style="left:271.20px;top:866px;letter-spacing:0.100px;color:#000">Virtualization platform:</div>
<div class="t" style="left:421.50px;top:866px;letter-spacing:-0.087px;color:#000">Unknown</div>
<div class="t" style="left:271.20px;top:888px;letter-spacing:-0.216px;color:#000">SAN copy capable:</div>
<div class="t" style="left:421.50px;top:888px;letter-spacing:0.261px;color:#000">No</div>
<div class="t" style="left:271.20px;top:921px;letter-spacing:0.026px;color:#000">Date modified:</div>
<div class="t" style="left:421.50px;top:921px;letter-spacing:-0.100px;color:#000">15/03/2020 15:51:11</div>
<div class="t" style="left:271.20px;top:943px;letter-spacing:-0.148px;color:#000">Date added:</div>
<div class="t" style="left:421.50px;top:943px;letter-spacing:-0.150px;color:#000">15/03/2020 15:51:10</div>
<div class="hr" style="left:271px;top:833px;width:639px"></div>
<div class="hr" style="left:271px;top:910px;width:639px"></div>
<div class="t" style="left:936.20px;top:723px;letter-spacing:-0.292px;color:#000">Family name:</div>
<div class="t" style="left:936.20px;top:745px;letter-spacing:-0.666px;color:#000">Release:</div>
<div class="t" style="left:936.20px;top:767px;letter-spacing:-0.462px;color:#000">Type:</div>
<div class="t" style="left:936.20px;top:789px;letter-spacing:-0.329px;color:#000">Namespace:</div>
<div class="t" style="left:1010px;top:789px;letter-spacing:-0.077px;color:#000">Global</div>
<div class="t" style="left:936.20px;top:811px;letter-spacing:-0.347px;color:#000">Release time:</div>
<svg style="left:1010px;top:771px" width="16" height="11" viewBox="0 0 16 11"><path d="M0 5.4L7.7 1.3L15.3 3.9L8.4 6.9Z" fill="#b4e8eb"/><path d="M2.5 5.2L7.8 2.4L12.8 4L8.3 6Z" fill="#e2f7f8" opacity=".75"/><path d="M0 5.4L8.4 6.9V9.4L0 7.6Z" fill="#8fdade"/><path d="M1.5 6.6L6.5 7.6" stroke="#e8fafa" stroke-width=".9"/><path d="M8.4 6.9L15.3 3.9V6.2L8.4 9.4Z" fill="#52c2ca"/><path d="M0 5.4L7.7 1.3L15.3 3.9" fill="none" stroke="#8ed8dd" stroke-width=".5"/><rect x="7.9" y="7.2" width="1.1" height="1.6" fill="#2a9a2a"/></svg>
<div class="t" style="left:1032.60px;top:767px;letter-spacing:-0.814px;color:#000">VHDX</div>
</div>
<div id="keytips">
<svg style="left:39px;top:36px" width="8" height="5" viewBox="0 0 8 5"><path d="M0 .6H7.4L3.7 4.4Z" fill="#fff"/></svg>
<div class="keytip" style="left:32px;top:39px;width:20px">F</div>
<div class="keytip" style="left:80px;top:46px;width:20px">H</div>
<div class="keytip" style="left:139px;top:46px;width:21px">O</div>
<div class="keytip" style="left:201px;top:46px;width:20px">JV</div>
</div>
</body>
</html>
